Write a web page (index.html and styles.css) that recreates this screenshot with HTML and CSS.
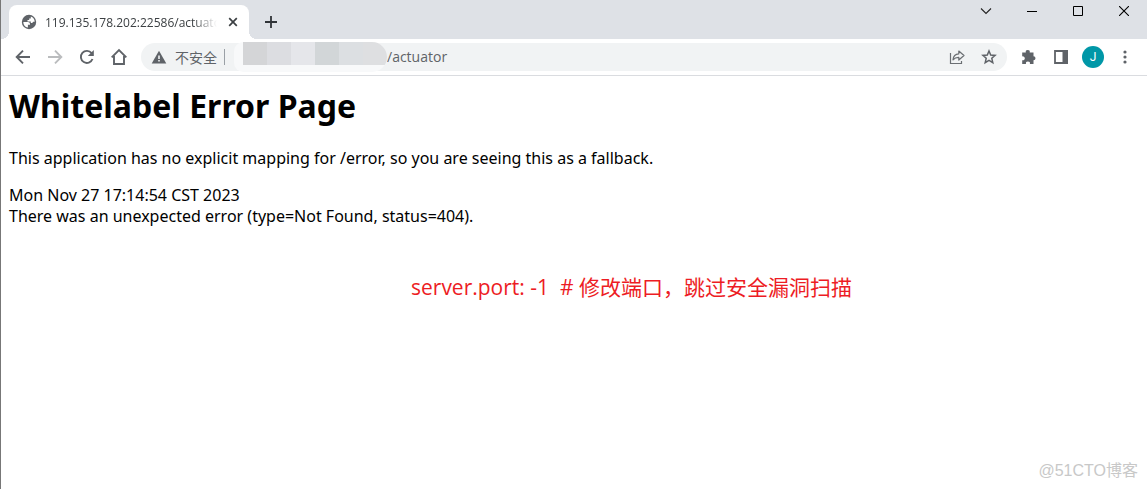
FILE: index.html
```
<!DOCTYPE html>
<html lang="zh-CN">
<head>
<meta charset="utf-8">
<title>119.135.178.202:22586/actuator</title>
<link rel="stylesheet" href="styles.css">
</head>
<body>
<div class="browser">
  <header class="tabstrip">
    <div class="tab">
      <svg class="favicon" width="16" height="16" viewBox="0 0 16 16"><circle cx="8" cy="8" r="7.200" fill="#5f6368"/><path d="M2.300 8h4.500c1.500 0 2.200.8 2.200 1.900v.9H6.900v2.800C4.100 13.100 2.200 11 2.300 8zM9.800 2.500c2.400.8 3.900 2.900 3.900 5.300h-1.500l-1 1.300H9.800V7.500H6.500V5.900h1.700V4.400h1.600z" fill="#fff"/></svg>
      <span class="tab-title">119.135.178.202:22586/actuator</span>
      <button class="tab-close" aria-label="关闭"><svg width="10" height="10" viewBox="0 0 10 10"><path d="M1.200 1.200l7.600 7.600M8.800 1.200L1.200 8.800" stroke="#3c4043" stroke-width="1.700"/></svg></button>
    </div>
    <button class="new-tab" aria-label="新标签页"><svg width="12" height="12" viewBox="0 0 12 12"><path d="M6 0v12M0 6h12" stroke="#303438" stroke-width="1.800"/></svg></button>
    <div class="window-controls">
      <button aria-label="搜索标签页"><svg width="12" height="12" viewBox="0 0 12 12"><path d="M1 3.500l5 5 5-5" fill="none" stroke="#222" stroke-width="1.100"/></svg></button>
      <button aria-label="最小化"><svg width="10" height="10" viewBox="0 0 10 10"><path d="M0 5.500h10" stroke="#000"/></svg></button>
      <button aria-label="最大化"><svg width="10" height="10" viewBox="0 0 10 10"><path d="M.5.5h9v9h-9z" fill="none" stroke="#000"/></svg></button>
      <button aria-label="关闭窗口"><svg width="10" height="10" viewBox="0 0 10 10"><path d="M0 0l10 10M10 0L0 10" stroke="#000" stroke-width="1.100"/></svg></button>
    </div>
  </header>
  <nav class="toolbar">
    <button class="tool" aria-label="后退"><svg width="16" height="16" viewBox="0 0 16 16"><path d="M15 8H2M8 1.700L1.700 8 8 14.300" fill="none" stroke="#5f6368" stroke-width="1.900"/></svg></button>
    <button class="tool" aria-label="前进" disabled><svg width="16" height="16" viewBox="0 0 16 16"><path d="M1 8h13M8 1.700L14.300 8 8 14.300" fill="none" stroke="#babcbe" stroke-width="1.900"/></svg></button>
    <button class="tool" aria-label="重新加载"><svg width="16" height="16" viewBox="0 0 16 16"><path d="M13.500 10A6 6 0 1 1 12.600 4.200" fill="none" stroke="#5f6368" stroke-width="1.900"/><path d="M14.800 1v6H8.800z" fill="#5f6368"/></svg></button>
    <button class="tool" aria-label="主页"><svg width="18" height="18" viewBox="0 0 18 18"><path d="M1.700 9.300L9 2l7.300 7.300M4 8v8h10V8" fill="none" stroke="#5f6368" stroke-width="1.900"/></svg></button>
    <div class="omnibox">
      <svg class="warning" width="16" height="14" viewBox="0 0 16 14"><path d="M8 .8L15.300 13.500H.7z" fill="#5f6368"/><path d="M7.200 5.500h1.600v3.400H7.200zM7.200 10h1.600v1.600H7.200z" fill="#f1f3f4"/></svg>
      <span class="security">不安全</span>
      <span class="divider"></span>
      <span class="mask"><i class="m1"></i><i class="m2"></i><i class="m3"></i><i class="m4"></i><i class="m5"></i><i class="m6"></i></span>
      <input class="address" type="text" value="/actuator" aria-label="地址栏">
      <button class="tool" aria-label="分享"><svg width="16" height="16" viewBox="0 0 16 16"><path d="M1.500 4v10.500h11V12" fill="none" stroke="#6b6f73" stroke-width="1.200"/><path d="M4 10.800C4.300 7 6.200 5 9.800 4.800V2L15 6.500 9.800 11V8.300C7.300 8.200 5.500 9 4 10.800z" fill="none" stroke="#6b6f73" stroke-width="1.200" stroke-linejoin="round"/></svg></button>
      <button class="tool" aria-label="收藏"><svg width="16" height="16" viewBox="0 0 16 16"><path d="M8 2l1.700 4 4.400.4-3.300 2.900 1 4.300L8 11.300l-3.800 2.300 1-4.300-3.300-2.900 4.400-.4z" fill="none" stroke="#5f6368" stroke-width="1.500"/></svg></button>
    </div>
    <button class="tool" aria-label="扩展程序"><svg width="16" height="16" viewBox="0 0 16 16"><path d="M1.200 3.500h3.600a2 2 0 1 1 3.900 0h3.800v3.800a2 2 0 1 1 0 4V15H8.900a2 2 0 1 0-3.900 0H1.200v-3.800a2 2 0 1 0 0-3.800z" fill="#5f6368"/></svg></button>
    <button class="tool" aria-label="侧边栏"><svg width="14" height="14" viewBox="0 0 14 14"><path d="M1 1h12v12H1z" fill="none" stroke="#5f6368" stroke-width="1.800"/><path d="M8.500 0H14v14H8.500z" fill="#5f6368"/></svg></button>
    <button class="tool" aria-label="个人资料"><span class="avatar">J</span></button>
    <button class="tool" aria-label="菜单"><svg width="4" height="14" viewBox="0 0 4 14"><g fill="#5f6368"><circle cx="2" cy="2" r="1.600"/><circle cx="2" cy="7" r="1.600"/><circle cx="2" cy="12" r="1.600"/></g></svg></button>
  </nav>
  <main class="page">
    <h1>Whitelabel Error Page</h1>
    <p>This application has no explicit mapping for /error, so you are seeing this as a fallback.</p>
    <div>Mon Nov 27 17:14:54 CST 2023</div>
    <div>There was an unexpected error (type=Not Found, status=404).</div>
    <p class="note">server.port: -1&nbsp; # 修改端口，跳过安全漏洞扫描</p>
    <footer class="watermark">@51CTO博客</footer>
  </main>
</div>
</body>
</html>
```

FILE: styles.css
```
* { box-sizing: border-box; }
body {
  margin: 0;
  background: #fff;
  color: #000;
  font-family: "Open Sans", "Noto Sans CJK SC", sans-serif;
}
button {
  display: flex;
  align-items: center;
  justify-content: center;
  flex: none;
  padding: 0;
  border: 0;
  background: none;
}
.browser {
  display: flex;
  flex-direction: column;
  min-height: 100vh;
  border-left: 1px solid #777;
}
.tabstrip {
  display: flex;
  align-items: flex-end;
  height: 39px;
  padding-left: 8px;
  background: #dee1e6;
}
.tab {
  position: relative;
  display: flex;
  align-items: center;
  gap: 8px;
  width: 240px;
  height: 34px;
  padding: 0 8px 0 12px;
  border-radius: 8px 8px 0 0;
  background: #fff;
}
.tab::before,
.tab::after {
  content: "";
  position: absolute;
  bottom: 0;
  width: 8px;
  height: 8px;
}
.tab::before {
  right: 100%;
  background: radial-gradient(circle at 0 0, #dee1e6 8px, #fff 8px);
}
.tab::after {
  left: 100%;
  background: radial-gradient(circle at 100% 0, #dee1e6 8px, #fff 8px);
}
.favicon { flex: none; }
.tab-title {
  flex: 1;
  overflow: hidden;
  white-space: nowrap;
  color: #3c4043;
  font-size: 12px;
  -webkit-mask-image: linear-gradient(to left, transparent, #000 24px);
  mask-image: linear-gradient(to left, transparent, #000 24px);
}
.tab-close { width: 16px; height: 16px; }
.new-tab { width: 28px; height: 34px; margin-left: 8px; }
.window-controls {
  display: flex;
  align-self: flex-start;
  margin-left: auto;
}
.window-controls button { width: 46px; height: 22px; }
.toolbar {
  display: flex;
  align-items: center;
  height: 37px;
  padding: 0 6px;
  border-bottom: 1px solid #dadce0;
}
.tool { width: 32px; height: 28px; }
.omnibox {
  display: flex;
  align-items: center;
  flex: 1;
  height: 28px;
  margin: 0 6px;
  padding: 0 2px 0 10px;
  border-radius: 14px;
  background: #f1f3f4;
  color: #5f6368;
  font-size: 14px;
  line-height: 20px;
}
.warning { flex: none; }
.security {
  flex: none;
  margin-left: 8px;
  font-family: "Noto Sans CJK SC", sans-serif;
}
.divider {
  width: 1px;
  height: 16px;
  margin: 0 9px 0 7px;
  background: #9aa0a6;
}
.mask {
  display: flex;
  flex: none;
  height: 30px;
  padding-left: 9px;
  border-radius: 10px 16px 16px 10px;
  background: #f8f9fa;
  overflow: hidden;
}
.mask i { width: 24px; height: 23px; }
.m1 { background: #d4d5d7; }
.m2 { background: #dcdde1; }
.m3 { background: #e5e6ea; }
.m4 { background: #d2d6d8; }
.m5 { background: #dcdfe2; }
.m6 { background: #dedfe1; }
.address {
  flex: 1;
  min-width: 0;
  height: 20px;
  padding: 0;
  border: 0;
  outline: 0;
  background: none;
  color: #5f6368;
  font: inherit;
}
.avatar {
  width: 22px;
  height: 22px;
  border-radius: 50%;
  background: #0097a7;
  color: #fff;
  font: 12px/22px Roboto, sans-serif;
  text-align: center;
}
.page {
  display: flex;
  flex-direction: column;
  flex: 1;
  padding: 8px;
  font-family: "Noto Sans", "Noto Sans CJK SC", sans-serif;
  font-size: 16px;
  line-height: 21px;
}
h1 {
  margin: 0 0 21px;
  font-size: 32px;
  line-height: 43px;
}
.page p { margin: 0 0 16px; }
.page .note {
  margin: 46px 0 0;
  padding-left: 402px;
  color: #ed1c24;
  font-family: "Open Sans", "Noto Sans CJK SC", sans-serif;
  font-size: 21px;
  line-height: 28px;
}
.watermark {
  margin-top: auto;
  padding-right: 1px;
  color: #c8c8c8;
  font-family: "Liberation Sans", "Noto Sans CJK SC", sans-serif;
  font-size: 16px;
  text-align: right;
}
```
